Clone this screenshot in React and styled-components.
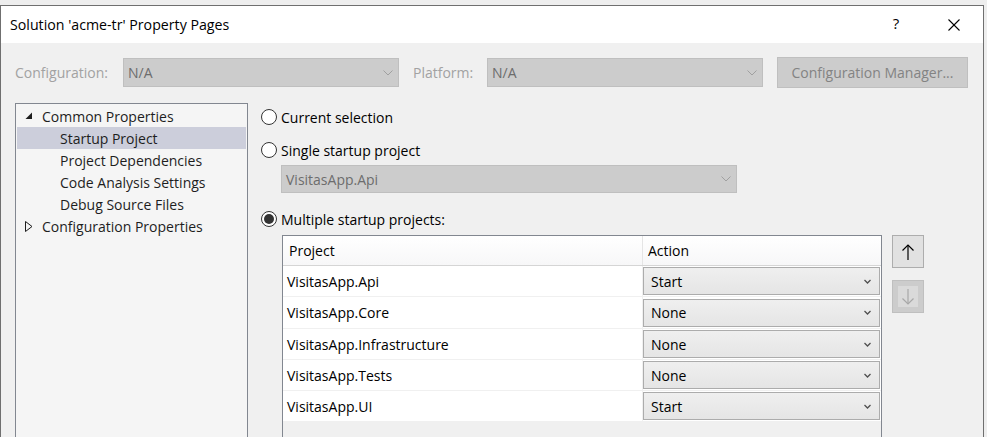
import React from "react";
import styled, { createGlobalStyle } from "styled-components";

const Global = createGlobalStyle`
  html, body { margin: 0; padding: 0; background: #eeeeee; }
  body { font-family: "Open Sans", "Noto Sans", sans-serif; font-size: 14px; color: #1e1e1e; }
  * { box-sizing: border-box; }
`;

const Page = styled.div`
  width: 987px;
  height: 437px;
  overflow: hidden;
  padding-top: 5px;
`;

const Window = styled.div`
  width: 984px;
  height: 432px;
  border: 1px solid #6f6f6f;
  border-bottom: none;
  background: #f0f0f0;
  display: flex;
  flex-direction: column;
  overflow: hidden;
`;

const TitleBar = styled.div`
  height: 37px;
  background: #ffffff;
  display: flex;
  align-items: center;
  padding-left: 9px;
  flex-shrink: 0;
`;

const Title = styled.div`
  flex: 1;
  font-size: 14.2px;
  color: #000;
`;

const TitleButton = styled.div`
  width: 58px;
  height: 37px;
  display: flex;
  align-items: center;
  justify-content: center;
  padding-bottom: ${(p) => p.$pb || 0}px;
  font-size: 15px;
  color: #000;
`;

const Body = styled.div`
  flex: 1;
  padding: 14px 0 0 14px;
  display: flex;
  flex-direction: column;
`;

const ConfigRow = styled.div`
  height: 31px;
  display: flex;
  align-items: center;
`;

const ConfigLabel = styled.div`
  width: ${(p) => p.$w}px;
  margin-left: ${(p) => p.$ml || 0}px;
  color: #a2a2a2;
  font-size: 14px;
`;

const Combo = styled.div`
  width: ${(p) => p.$w}px;
  height: ${(p) => p.$h || 29}px;
  background: ${(p) => (p.$active ? "linear-gradient(#efefef, #e5e5e5)" : "#cccccc")};
  border: 1px solid ${(p) => (p.$active ? "#acacac" : "#bfbfbf")};
  display: flex;
  align-items: center;
  padding: 0 ${(p) => (p.$active ? 8 : 5)}px 0 ${(p) => (p.$active ? 7 : 4)}px;
  color: ${(p) => (p.$active ? "#000" : "#6d6d6d")};
  font-size: 14px;
  margin-left: ${(p) => p.$ml || 0}px;
  margin-top: ${(p) => p.$mt || 0}px;
  flex-shrink: 0;
`;

const ComboText = styled.span`
  flex: 1;
`;

const ConfigButton = styled.div`
  width: 191px;
  height: 31px;
  margin-left: 14px;
  background: #cccccc;
  border: 1px solid #bfbfbf;
  color: #838383;
  display: flex;
  align-items: center;
  justify-content: center;
  font-size: 14px;
`;

const Main = styled.div`
  flex: 1;
  display: flex;
  margin-top: 15px;
`;

const Tree = styled.div`
  width: 233px;
  background: #f5f5f5;
  border: 1px solid #828790;
  border-bottom: none;
  padding-top: 1px;
  flex-shrink: 0;
`;

const TreeItem = styled.div`
  height: 22px;
  margin: 0 1px;
  display: flex;
  align-items: center;
  padding-left: ${(p) => (p.$child ? 43 : 8)}px;
  background: ${(p) => (p.$selected ? "#cccedb" : "transparent")};
  color: #1e1e1e;
  font-size: 14px;
`;

const Expander = styled.span`
  width: 17px;
  display: flex;
  align-items: center;
`;

const RightPane = styled.div`
  margin-left: 13px;
  display: flex;
  flex-direction: column;
`;

const RadioRow = styled.label`
  height: 28px;
  display: flex;
  align-items: center;
  margin-top: ${(p) => p.$mt || 0}px;
  font-size: 14px;
  color: #000;
`;

const RadioCircle = styled.span`
  width: 16px;
  height: 16px;
  border-radius: 50%;
  border: 1px solid #333;
  background: #fff;
  margin-right: 4px;
  display: flex;
  align-items: center;
  justify-content: center;
  &::after {
    content: "";
    display: ${(p) => (p.$checked ? "block" : "none")};
    width: 10px;
    height: 10px;
    border-radius: 50%;
    background: #333;
  }
`;

const GridRow = styled.div`
  display: flex;
  margin-top: 2px;
  margin-left: 21px;
  flex: 1;
`;

const Table = styled.div`
  width: 600px;
  border: 1px solid #828790;
  border-bottom: none;
  background: #f0f0f0;
  display: flex;
  flex-direction: column;
`;

const HeaderRow = styled.div`
  height: 30px;
  display: flex;
  background: linear-gradient(#ffffff, #f7f7f8);
  border-bottom: 1px solid #d5d5d5;
`;

const HeaderCell = styled.div`
  width: ${(p) => (p.$w ? p.$w + "px" : "auto")};
  flex: ${(p) => (p.$w ? "none" : 1)};
  display: flex;
  align-items: center;
  padding-left: ${(p) => p.$pl}px;
  border-right: ${(p) => (p.$w ? "1px solid #e5e5e5" : "none")};
  font-size: 14px;
  color: #000;
`;

const DataRow = styled.div`
  height: ${(p) => p.$h}px;
  display: flex;
  background: #fff;
  border-bottom: 1px solid #f0f0f0;
`;

const NameCell = styled.div`
  width: 360px;
  display: flex;
  align-items: center;
  padding-left: 4px;
  border-right: 1px solid #f0f0f0;
  font-size: 14px;
  color: #000;
`;

const ActionCell = styled.div`
  flex: 1;
  display: flex;
  align-items: center;
`;

const SideButtons = styled.div`
  margin-left: 10px;
  display: flex;
  flex-direction: column;
`;

const MoveButton = styled.div`
  width: 32px;
  height: 33px;
  margin-top: ${(p) => p.$mt || 0}px;
  background: ${(p) => (p.$disabled ? "#cccccc" : "#e1e1e1")};
  border: 1px solid ${(p) => (p.$disabled ? "#bfbfbf" : "#adadad")};
  display: flex;
  align-items: center;
  justify-content: center;
`;

const DisabledInner = styled.div`
  width: 20px;
  height: 21px;
  background: #dadada;
  display: flex;
  align-items: center;
  justify-content: center;
`;

const Chevron = ({ color = "#a0a0a0", w = 10 }) => (
  <svg width={w} height={w / 2 + 1} viewBox={`0 0 ${w} ${w / 2 + 1}`}>
    <polyline points={`0.5,0.5 ${w / 2},${w / 2} ${w - 0.5},0.5`} fill="none" stroke={color} strokeWidth="1" />
  </svg>
);

const SmallChevron = () => (
  <svg width="7" height="5" viewBox="0 0 7 5">
    <polyline points="0.5,1 3.5,4 6.5,1" fill="none" stroke="#505050" strokeWidth="1.3" />
  </svg>
);

const ArrowUp = ({ color = "#000" }) => (
  <svg width="12" height="16" viewBox="0 0 12 16">
    <line x1="6" y1="1" x2="6" y2="16" stroke={color} strokeWidth="1.2" />
    <polyline points="0.5,6.5 6,1 11.5,6.5" fill="none" stroke={color} strokeWidth="1.2" />
  </svg>
);

const ArrowDown = ({ color = "#a8a8a8" }) => (
  <svg width="12" height="16" viewBox="0 0 12 16">
    <line x1="6" y1="0" x2="6" y2="15" stroke={color} strokeWidth="1.2" />
    <polyline points="0.5,9.5 6,15 11.5,9.5" fill="none" stroke={color} strokeWidth="1.2" />
  </svg>
);

const CloseIcon = () => (
  <svg width="12" height="12" viewBox="0 0 12 12">
    <line x1="0.5" y1="0.5" x2="11.5" y2="11.5" stroke="#000" strokeWidth="1.1" />
    <line x1="11.5" y1="0.5" x2="0.5" y2="11.5" stroke="#000" strokeWidth="1.1" />
  </svg>
);

const ExpandedIcon = () => (
  <svg width="8" height="8" viewBox="0 0 8 8">
    <polygon points="7,0.5 7,7 0.5,7" fill="#1e1e1e" />
  </svg>
);

const CollapsedIcon = () => (
  <svg width="8" height="11" viewBox="0 0 8 11">
    <polygon points="0.5,0.5 7,5.5 0.5,10.5" fill="none" stroke="#1e1e1e" strokeWidth="1" />
  </svg>
);

const projects = [
  { name: "VisitasApp.Api", action: "Start", h: 31 },
  { name: "VisitasApp.Core", action: "None", h: 32 },
  { name: "VisitasApp.Infrastructure", action: "None", h: 31 },
  { name: "VisitasApp.Tests", action: "None", h: 31 },
  { name: "VisitasApp.UI", action: "Start", h: 31 },
];

export default function App() {
  return (
    <Page>
      <Global />
      <Window>
        <TitleBar>
          <Title>Solution 'acme-tr' Property Pages</Title>
          <TitleButton $pb={4}>?</TitleButton>
          <TitleButton>
            <CloseIcon />
          </TitleButton>
        </TitleBar>
        <Body>
          <ConfigRow>
            <ConfigLabel $w={108}>Configuration:</ConfigLabel>
            <Combo $w={276}>
              <ComboText>N/A</ComboText>
              <Chevron />
            </Combo>
            <ConfigLabel $w={74} $ml={14}>Platform:</ConfigLabel>
            <Combo $w={276}>
              <ComboText>N/A</ComboText>
              <Chevron />
            </Combo>
            <ConfigButton>Configuration Manager...</ConfigButton>
          </ConfigRow>
          <Main>
            <Tree>
              <TreeItem>
                <Expander>
                  <ExpandedIcon />
                </Expander>
                Common Properties
              </TreeItem>
              <TreeItem $child $selected>Startup Project</TreeItem>
              <TreeItem $child>Project Dependencies</TreeItem>
              <TreeItem $child>Code Analysis Settings</TreeItem>
              <TreeItem $child>Debug Source Files</TreeItem>
              <TreeItem>
                <Expander>
                  <CollapsedIcon />
                </Expander>
                Configuration Properties
              </TreeItem>
            </Tree>
            <RightPane>
              <RadioRow>
                <RadioCircle />
                Current selection
              </RadioRow>
              <RadioRow $mt={5}>
                <RadioCircle />
                Single startup project
              </RadioRow>
              <Combo $w={456} $h={28} $ml={20} $mt={1}>
                <ComboText>VisitasApp.Api</ComboText>
                <Chevron />
              </Combo>
              <RadioRow $mt={12}>
                <RadioCircle $checked />
                Multiple startup projects:
              </RadioRow>
              <GridRow>
                <Table>
                  <HeaderRow>
                    <HeaderCell $w={360} $pl={6}>Project</HeaderCell>
                    <HeaderCell $pl={5}>Action</HeaderCell>
                  </HeaderRow>
                  {projects.map((p) => (
                    <DataRow key={p.name} $h={p.h}>
                      <NameCell>{p.name}</NameCell>
                      <ActionCell>
                        <Combo $w={237} $h={28} $active>
                          <ComboText>{p.action}</ComboText>
                          <SmallChevron />
                        </Combo>
                      </ActionCell>
                    </DataRow>
                  ))}
                </Table>
                <SideButtons>
                  <MoveButton>
                    <ArrowUp />
                  </MoveButton>
                  <MoveButton $disabled $mt={12}>
                    <DisabledInner>
                      <ArrowDown />
                    </DisabledInner>
                  </MoveButton>
                </SideButtons>
              </GridRow>
            </RightPane>
          </Main>
        </Body>
      </Window>
    </Page>
  );
}
